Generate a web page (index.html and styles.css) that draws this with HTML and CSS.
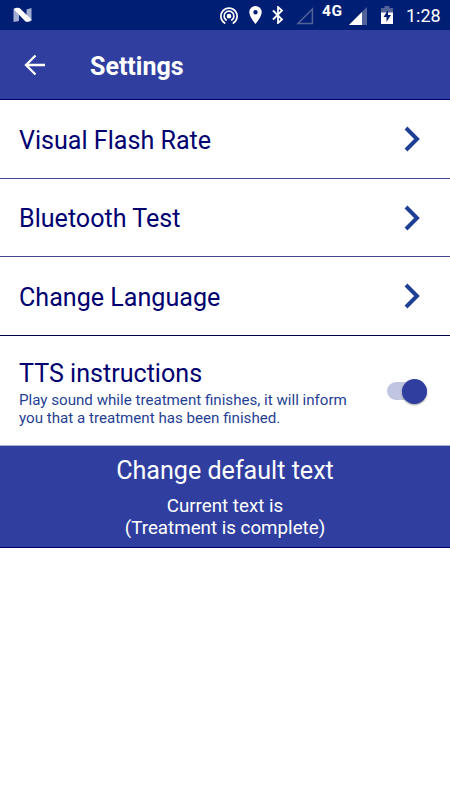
FILE: index.html
```html
<!DOCTYPE html>
<html lang="en">
<head>
    <meta charset="UTF-8">
    <meta name="viewport" content="width=device-width, initial-scale=1.0">
    <title>Settings</title>
    <link rel="stylesheet" href="styles.css">
</head>
<body>
    <!-- Status bar -->
    <div class="status-bar">
        <svg class="logo" width="20" height="16" viewBox="0 0 20 16">
            <path d="M.5 2.500L6 1v13L.5 15zM13.500 2.500l5-1.500v13l-5 1z" fill="#a3aed2"/>
            <path d="M.5 2Q3.500 0 6.500 1L18.500 12.500Q16 15.500 12.500 14.500z" fill="#fff"/>
        </svg>
        <div class="status-icons">
            <svg class="hotspot" width="18" height="18" viewBox="0 0 18 18" fill="none" stroke="#fff" stroke-width="1.700" stroke-linecap="round">
                <path d="M4.600 16A8.100 8.100 0 1 1 13.400 16"/>
                <path d="M6.200 13A4.900 4.900 0 1 1 11.800 13"/>
                <circle cx="9" cy="9.200" r="1.500" fill="#fff"/>
            </svg>
            <svg class="pin" width="13" height="18" viewBox="0 0 13 18">
                <path fill="#fff" fill-rule="evenodd" d="M6.500 0A6.200 6.200 0 0 0 .3 6.200C.3 10.800 6.500 18 6.500 18s6.200-7.200 6.200-11.800A6.200 6.200 0 0 0 6.500 0zm0 8.500a2.200 2.200 0 1 1 0-4.400 2.200 2.200 0 0 1 0 4.400z"/>
            </svg>
            <svg class="bluetooth" width="12" height="18" viewBox="0 0 12 18" fill="none" stroke="#fff" stroke-width="1.800">
                <path d="M1 4.500l9 9L6 17V1l4 3.500-9 9"/>
            </svg>
            <svg class="no-signal" width="18" height="18" viewBox="0 0 18 18">
                <path d="M2 16.500L16.400 2v14.500z" fill="none" stroke="#526399" stroke-width="1.500"/>
            </svg>
            <span class="network">4G</span>
            <svg class="signal" width="18" height="18" viewBox="0 0 18 18">
                <path d="M0 18L18 0v18z" fill="#526399"/>
                <path d="M0 18L13 5v13z" fill="#fff"/>
            </svg>
            <svg class="battery" width="12" height="18" viewBox="0 0 12 18">
                <path d="M0 2h3.500V0h5v2H12v5H0z" fill="#526399"/>
                <path d="M0 6.500h12V18H0z" fill="#fff"/>
                <path d="M7 4L2.500 11h3v5L10 9H7z" fill="#001f74"/>
            </svg>
            <span class="clock">1:28</span>
        </div>
    </div>

    <header>
        <svg class="back" width="22" height="22" viewBox="0 0 22 22" fill="none" stroke="#fff" stroke-width="2.300">
            <path d="M21 11H2.500M11.500 1.500L2 11l9.500 9.500"/>
        </svg>
        <h1>Settings</h1>
    </header>

    <div class="row">
        <h2>Visual Flash Rate</h2>
        <svg class="chevron" width="17" height="26" viewBox="0 0 17 26">
            <path d="M2 2l11 11L2 24"/>
        </svg>
    </div>
    <div class="row short">
        <h2>Bluetooth Test</h2>
        <svg class="chevron" width="17" height="26" viewBox="0 0 17 26">
            <path d="M2 2l11 11L2 24"/>
        </svg>
    </div>
    <div class="row last">
        <h2>Change Language</h2>
        <svg class="chevron" width="17" height="26" viewBox="0 0 17 26">
            <path d="M2 2l11 11L2 24"/>
        </svg>
    </div>

    <div class="tts">
        <div class="tts-text">
            <h2>TTS instructions</h2>
            <p>Play sound while treatment finishes, it will inform<br>you that a treatment has been finished.</p>
        </div>
        <div class="switch"><div class="thumb"></div></div>
    </div>

    <div class="default-text">
        <h2>Change default text</h2>
        <p>Current text is<br>(Treatment is complete)</p>
    </div>
</body>
</html>
```
FILE: styles.css
```css
* {
    box-sizing: border-box;
}
body {
    margin: 0;
    font-family: Roboto, "Liberation Sans", sans-serif;
    background-color: #fff;
    color: #000070;
}
h1, h2, p {
    margin: 0;
    font-weight: 400;
    white-space: nowrap;
}
svg {
    display: block;
    flex-shrink: 0;
}
.status-bar {
    display: flex;
    justify-content: space-between;
    height: 30px;
    padding: 0 9px 0 13px;
    background-color: #001f74;
    color: #fff;
}
.logo {
    margin-top: 7px;
}
.status-icons {
    display: flex;
}
.hotspot {
    margin: 7px 11px 0 0;
}
.pin {
    margin: 6px 10px 0 0;
}
.bluetooth {
    margin: 6px 12px 0 0;
}
.no-signal {
    margin: 7px 8px 0 0;
}
.network {
    width: 21px;
    margin: 2px 6px 0 0;
    font-size: 15.5px;
    line-height: 19px;
    font-weight: 700;
    letter-spacing: 0.5px;
}
.signal {
    margin: 7px 14px 0 0;
}
.battery {
    margin: 6px 13px 0 0;
}
.clock {
    width: 35px;
    font-size: 18px;
    line-height: 32px;
    font-weight: 400;
    white-space: nowrap;
}
header {
    display: flex;
    align-items: center;
    height: 70px;
    padding-left: 24px;
    background-color: #303f9f;
    border-bottom: 1px solid #00006c;
}
.back {
    margin-right: 44px;
}
h1 {
    padding-top: 4px;
    font-size: 25px;
    font-weight: 700;
    line-height: 30px;
    color: #fff;
}
h2 {
    font-size: 25.1px;
    line-height: 30px;
}
.row {
    display: flex;
    align-items: center;
    justify-content: space-between;
    height: 79px;
    padding: 0 29px 0 19px;
    border-bottom: 1px solid #41478b;
}
.row h2 {
    padding-top: 3px;
}
.row.short {
    height: 78px;
}
.row.last {
    border-bottom-color: #000040;
}
.chevron path {
    fill: none;
    stroke: #1e3f94;
    stroke-width: 4;
}
.tts {
    display: flex;
    justify-content: space-between;
    height: 109px;
    padding: 23px 23px 0 19px;
}
.tts p {
    margin-top: 3px;
    font-size: 15.13px;
    line-height: 17.5px;
    color: #1f3f94;
}
.switch {
    display: flex;
    align-items: center;
    justify-content: flex-end;
    width: 40px;
    height: 18px;
    margin-top: 23px;
    border-radius: 9px;
    background-color: #c0c5e2;
}
.thumb {
    flex-shrink: 0;
    width: 25px;
    height: 25px;
    border-radius: 50%;
    background-color: #303f9f;
    box-shadow: 0 1px 2px rgba(0, 0, 0, 0.4);
}
.default-text {
    height: 103px;
    padding-top: 10px;
    background-color: #303f9f;
    border-top: 1px solid #a9b0d3;
    border-bottom: 1px solid #00006c;
    color: #fff;
    text-align: center;
}
.default-text p {
    margin-top: 9px;
    font-size: 18.75px;
    line-height: 22px;
}
```
